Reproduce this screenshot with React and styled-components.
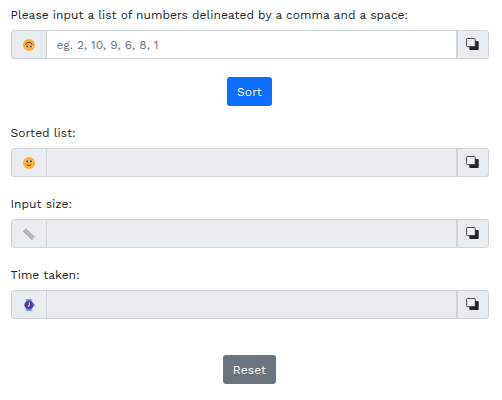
import React from "react";
import styled, { createGlobalStyle } from "styled-components";

const GlobalStyle = createGlobalStyle`
  *, *::before, *::after { box-sizing: border-box; }
  body {
    margin: 0;
    background: #fff;
    color: #212529;
    font-family: "Work Sans", Inter, "Liberation Sans", sans-serif;
    font-size: 12px;
    line-height: 18px;
  }
`;

const Page = styled.main`
  display: flex;
  flex-direction: column;
  padding: 6px 13px 0 11px;
`;

const Field = styled.div`
  display: flex;
  flex-direction: column;
  gap: 6px;
  margin-bottom: 18px;
`;

const Label = styled.label`
  height: 18px;
  align-self: flex-start;
  margin-left: -0.4px;
  white-space: nowrap;
  letter-spacing: 0.02px;
`;

const InputGroup = styled.div`
  display: flex;
  height: 29px;
`;

const Prefix = styled.span`
  display: flex;
  align-items: center;
  justify-content: center;
  width: 36px;
  background: #e9ecef;
  border: 1px solid #ced4da;
  border-radius: 3px 0 0 3px;
`;

const Input = styled.input`
  flex: 1;
  min-width: 0;
  margin-left: -1px;
  padding: 0 9px 0 9.4px;
  border: 1px solid #ced4da;
  border-radius: 0;
  background: ${(p) => (p.readOnly ? "#e9ecef" : "#fff")};
  color: #212529;
  font: inherit;
  outline: none;
  &::placeholder { color: #6c757d; opacity: 1; }
`;

const CopyButton = styled.button`
  display: flex;
  align-items: center;
  justify-content: flex-start;
  width: 32px;
  padding: 0 0 1px 8px;
  background: #e9ecef;
  border: 1px solid #ced4da;
  border-radius: 0 3px 3px 0;
`;

const Icon = styled.svg`
  display: block;
  width: ${(p) => p.$width || 12}px;
  height: 12px;
`;

const Button = styled.button`
  align-self: center;
  width: ${(p) => p.$width}px;
  height: 29px;
  margin: ${(p) => p.$margin};
  padding: 0;
  border: 0;
  border-radius: 3px;
  background: ${(p) => (p.$variant === "primary" ? "#0d6efd" : "#6c757d")};
  color: #fff;
  font: inherit;
  letter-spacing: 0.1px;
`;

function CopyIcon() {
  return (
    <Icon $width={13} viewBox="0 0 13 12">
      <rect x="3.3" y="3" width="9.4" height="9" rx="0.8" fill="#212529" />
      <rect x="0.6" y="0.5" width="8.6" height="8.1" rx="0.9" fill="#f1f3f5" stroke="#343638" strokeWidth="0.9" />
    </Icon>
  );
}

function SmileyIcon({ flipped }) {
  return (
    <Icon viewBox="0 0 12 12">
      <g transform={flipped ? "rotate(180 6 6)" : undefined}>
        <circle cx="6" cy="6" r="6" fill="#ffad32" />
        <circle cx="3.8" cy="4.3" r="1.6" fill="#fff" opacity="0.5" />
        <circle cx="8.2" cy="4.3" r="1.6" fill="#fff" opacity="0.5" />
        <ellipse cx="4.1" cy="4.4" rx="0.9" ry="1.1" fill="#30304c" />
        <ellipse cx="7.9" cy="4.4" rx="0.9" ry="1.1" fill="#30304c" />
        <path
          d={flipped ? "M2.6 6.2 Q3.4 8.8 6 8.8 Q8.6 8.8 9.4 6.2" : "M3.7 7.8 Q6 9.2 8.3 7.8"}
          fill="none"
          stroke="#624336"
          strokeWidth="1"
        />
      </g>
    </Icon>
  );
}

function RulerIcon() {
  return (
    <Icon viewBox="0 0 12 12">
      <path d="M0 3.2 L3 0.2 L12 8.8 L9 11.9 Z" fill="#bcb8c1" />
      <path d="M0 3.2 L9 11.9 L9.6 11.2 L0.6 2.6 Z" fill="#aaa4b0" />
      <path
        d="M3.7 1.2 l-1 1 M5.4 2.8 l-1 1 M7.1 4.4 l-1 1 M8.8 6 l-1 1 M10.5 7.6 l-1 1"
        stroke="#a19ba9"
        strokeWidth="0.5"
      />
    </Icon>
  );
}

function WatchIcon() {
  return (
    <Icon viewBox="0 0 12 12">
      <path d="M2.8 0h6.4v3H2.8zM2.8 9h6.4v3H2.8z" fill="#7da2fb" />
      <rect x="9.8" y="4.8" width="2" height="2.4" rx="0.6" fill="#8b83ed" />
      <circle cx="6" cy="6" r="4.3" fill="#49369a" stroke="#6c62e0" strokeWidth="0.9" />
      <path d="M6.3 3.2V6.2L5 7.6" fill="none" stroke="#ffdc73" strokeWidth="1.2" />
    </Icon>
  );
}

function FormField({ id, label, icon, ...inputProps }) {
  return (
    <Field>
      <Label htmlFor={id}>{label}</Label>
      <InputGroup>
        <Prefix>{icon}</Prefix>
        <Input id={id} type="text" {...inputProps} />
        <CopyButton type="button" aria-label="Copy"><CopyIcon /></CopyButton>
      </InputGroup>
    </Field>
  );
}

export default function App() {
  return (
    <>
      <GlobalStyle />
      <Page>
        <FormField
          id="numbers"
          label="Please input a list of numbers delineated by a comma and a space:"
          icon={<SmileyIcon flipped />}
          placeholder="eg. 2, 10, 9, 6, 8, 1"
        />
        <Button type="button" $variant="primary" $width={45} $margin="0 1px 18px 0">Sort</Button>
        <FormField id="sorted" label="Sorted list:" icon={<SmileyIcon />} readOnly />
        <FormField id="size" label="Input size:" icon={<RulerIcon />} readOnly />
        <FormField id="time" label="Time taken:" icon={<WatchIcon />} readOnly />
        <Button type="button" $variant="secondary" $width={53} $margin="18px 1px 0 0">Reset</Button>
      </Page>
    </>
  );
}
